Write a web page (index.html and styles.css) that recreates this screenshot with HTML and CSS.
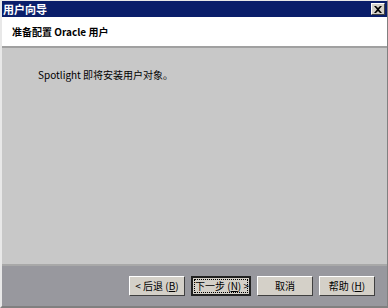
FILE: index.html
```html
<!DOCTYPE html>
<html lang="zh">

<head>
    <meta charset="UTF-8">
    <title>用户向导</title>
    <link rel="stylesheet" href="styles.css">
</head>

<body>
    <div class="wizard">
        <!-- TITLE BAR -->
        <div class="titlebar">
            <span class="title">用户向导</span>
            <div class="close">
                <svg width="8" height="7" viewBox="0 0 8 7">
                    <path d="M0 0h2l2 2 2-2h2L5 3.5 8 7H6L4 5 2 7H0l3-3.5z" fill="#000" />
                </svg>
            </div>
        </div>

        <!-- HEADER -->
        <div class="header">准备配置 Oracle 用户</div>

        <!-- BODY -->
        <div class="content">
            <p class="message">Spotlight 即将安装用户对象。</p>
        </div>

        <!-- BUTTONS -->
        <div class="footer">
            <button class="btn">&lt; 后退 (<u>B</u>)</button>
            <button class="btn default"><span class="focus">下一步 (<u>N</u>) &gt;</span></button>
            <button class="btn cancel">取消</button>
            <button class="btn">帮助 (<u>H</u>)</button>
        </div>
    </div>
</body>

</html>
```

FILE: styles.css
```css
* {
    margin: 0;
    padding: 0;
    box-sizing: border-box;
}

body {
    width: 388px;
    height: 308px;
    overflow: hidden;
    font-family: "Noto Sans CJK SC", "Liberation Sans", sans-serif;
    font-size: 10px;
    color: #000;
}

.wizard {
    width: 388px;
    height: 308px;
    display: flex;
    flex-direction: column;
    background-color: #c8c8c8;
    border-left: 2px solid #e8e8e8;
    border-right: 1px solid #808080;
    border-bottom: 2px solid #808080;
    border-top: 1px solid #e8e8e8;
}

.titlebar {
    height: 16px;
    background-color: #0a1e6a;
    display: flex;
    align-items: center;
    justify-content: space-between;
    padding: 0 2px 0 1px;
}

.title {
    color: #fff;
    font-weight: bold;
    font-size: 11px;
    line-height: 14px;
}

.close {
    width: 14px;
    height: 12px;
    background-color: #d4d0c8;
    border: 1px solid;
    border-color: #fff #404040 #404040 #fff;
    display: flex;
    align-items: center;
    justify-content: center;
}

.header {
    height: 31px;
    background-color: #fff;
    border-bottom: 2px solid #a0a0a0;
    padding: 8px 0 0 10px;
    font-weight: bold;
    line-height: 14px;
}

.content {
    flex: 1;
    padding: 20px 0 0 36px;
}

.message {
    line-height: 14px;
}

.footer {
    height: 42px;
    background-color: #98989e;
    border-top: 2px solid #a8a8a8;
    display: flex;
    justify-content: flex-end;
    align-items: flex-start;
    gap: 6px;
    padding: 10px 12px 0 0;
}

.btn {
    width: 56px;
    height: 20px;
    background-color: #d4d0c8;
    border: 1px solid;
    border-color: #fff #404040 #404040 #fff;
    font-family: inherit;
    font-size: 10px;
    line-height: 14px;
    color: #000;
}

.btn.default {
    width: 60px;
    border: 2px solid #202020;
    padding: 1px;
}

.focus {
    display: block;
    border: 1px dotted #000;
    line-height: 12px;
    white-space: nowrap;
}
```
